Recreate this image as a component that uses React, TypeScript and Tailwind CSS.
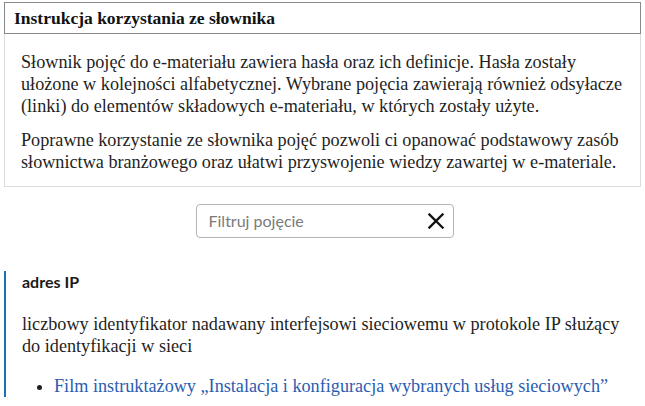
export default function App() {
  return (
    <div className="w-[645px] h-[406px] overflow-hidden bg-white text-[#1f1f1f] font-[family-name:Liberation_Serif,serif]">
      <div className="pt-[2px] px-[4px]">
        {/* Instruction header */}
        <div className="border border-[#858b8b] h-[32px] flex items-center px-[9px]">
          <h2 className="text-[17.5px] font-bold text-[#111]">Instrukcja korzystania ze słownika</h2>
        </div>
        <div className="border border-t-0 border-[#dcdcdc] pt-[17px] pb-[13px] px-[16px] text-[18.2px] leading-[22px]">
          <p>
            Słownik pojęć do e-materiału zawiera hasła oraz ich definicje. Hasła zostały
            <br />
            ułożone w kolejności alfabetycznej. Wybrane pojęcia zawierają również odsyłacze
            <br />
            (linki) do elementów składowych e-materiału, w których zostały użyte.
          </p>
          <p className="mt-[12px]">
            Poprawne korzystanie ze słownika pojęć pozwoli ci opanować podstawowy zasób
            <br />
            słownictwa branżowego oraz ułatwi przyswojenie wiedzy zawartej w e-materiale.
          </p>
        </div>
      </div>

      {/* Filter */}
      <div className="flex justify-center mt-[17px] pl-[4px]">
        <div className="w-[258px] h-[34px] border border-[#b3b3b3] rounded-[4px] flex items-center pl-[12px] pr-[9px] font-[family-name:Lato,sans-serif]">
          <input
            className="flex-1 min-w-0 outline-none text-[16px] placeholder:text-[#7a7a7a] bg-transparent"
            placeholder="Filtruj pojęcie"
          />
          <svg width="16" height="16" viewBox="0 0 16 16" className="text-[#111]">
            <path d="M1.5 1.5 L14.5 14.5 M14.5 1.5 L1.5 14.5" stroke="currentColor" strokeWidth="2.3" strokeLinecap="square" fill="none" />
          </svg>
        </div>
      </div>

      {/* Entry */}
      <div className="mt-[33px] ml-[4px] border-l-2 border-[#1f6fb2] pl-[16px]">
        <h3 className="text-[16px] font-bold leading-[22px] text-[#1a1a1a] font-[family-name:Lato,sans-serif]">adres IP</h3>
        <p className="mt-[20px] text-[18.2px] leading-[22px]">
          liczbowy identyfikator nadawany interfejsowi sieciowemu w protokole IP służący
          <br />
          do identyfikacji w sieci
        </p>
        <ul className="mt-[18px] list-disc pl-[32px] text-[18.2px] leading-[22px]">
          <li>
            <a href="#" className="text-[#2a5db0]">
              Film instruktażowy „Instalacja i konfiguracja wybranych usług sieciowych”
            </a>
          </li>
        </ul>
      </div>
    </div>
  );
}
